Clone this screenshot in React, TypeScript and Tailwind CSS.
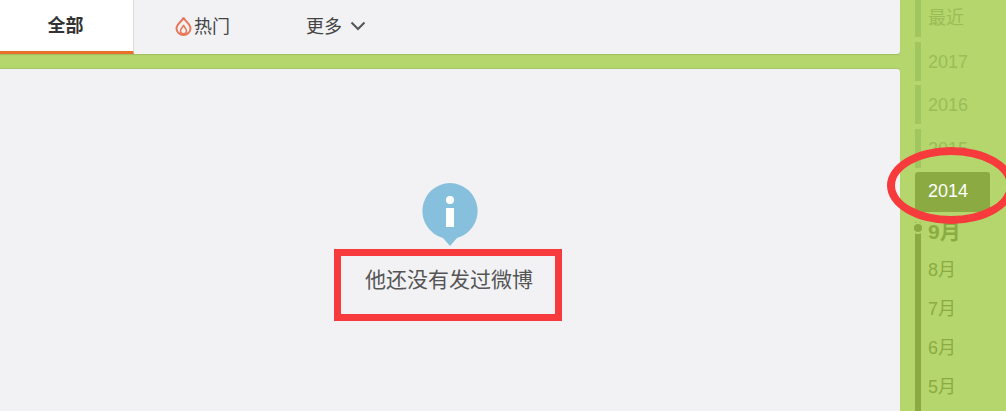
const font = { fontFamily: '"Microsoft YaHei", "Liberation Sans", "Noto Sans CJK SC", sans-serif' };

function YearRow({ label }: { label: string }) {
  return (
    <div className="flex h-[43.5px] shrink-0">
      <div className="w-[6px] h-[39px] bg-[#a1c660] shrink-0" />
      <div className="ml-[7px] mt-[8px] text-[18px] leading-[24px] text-[#9abd58]">{label}</div>
    </div>
  );
}

function MonthRow({ label }: { label: string }) {
  return (
    <div className="flex h-[39px] shrink-0">
      <div className="w-[6px] h-full bg-[#8bab42] shrink-0" />
      <div className="ml-[7px] mt-[6px] text-[18px] leading-[24px] text-[#8bab42]">{label}</div>
    </div>
  );
}

export default function App() {
  return (
    <div style={font} className="relative w-[1006px] h-[411px] overflow-hidden bg-[#b5d66d] flex">
      <div className="w-[900px] shrink-0 flex flex-col">
        <div className="h-[54px] bg-[#f2f2f5] rounded-br-[3px] flex text-[18px] text-[#444] shadow-[0_1px_1px_rgba(0,0,0,0.12)]">
          <div className="w-[134px] h-full bg-white border-b-[3px] border-[#e96f2b] border-r border-r-[#dcdcdc] flex items-center justify-center font-bold text-[#333] pr-[2px] pt-[1px]">
            全部
          </div>
          <div className="ml-[41px] h-full flex items-center">
            <svg width="17" height="20" viewBox="0 0 17 20" fill="none" stroke="#e8775a" strokeWidth="2" className="mr-[2px] mb-[2px]">
              <path d="M8.5 1.5C8 5 1.500 7.500 1.500 12.500a7 6.500 0 0 0 14 0C15.500 7.500 9.500 5 8.500 1.500Z" />
              <path d="M8.500 9c-.5 2-3 3.500-3 5.800a3 3 0 0 0 6 0C11.500 12.500 9 11 8.500 9Z" strokeWidth="1.500" />
            </svg>
            <span>热门</span>
          </div>
          <div className="ml-[76px] h-full flex items-center">
            <span>更多</span>
            <svg width="16" height="10" viewBox="0 0 16 10" fill="none" stroke="#555" strokeWidth="2" className="ml-[8px] mb-[3px]">
              <path d="M1.500 1.500 8 8l6.500-6.500" />
            </svg>
          </div>
        </div>
        <div className="mt-[15px] flex-1 bg-[#f2f2f5] rounded-tr-[3px] flex flex-col items-center pt-[113px] shadow-[0_-1px_1px_rgba(0,0,0,0.08)]">
          <svg width="58" height="66" viewBox="0 0 58 66">
            <path d="M29 1a28 28 0 0 1 7 55L29 64l-7-8A28 28 0 0 1 29 1Z" fill="#86c0dd" />
            <circle cx="29" cy="18" r="4" fill="#fff" />
            <rect x="25" y="26" width="8" height="19" fill="#fff" />
          </svg>
          <div className="mt-[18px] mr-[2px] text-[21px] leading-[28px] text-[#555]">他还没有发过微博</div>
        </div>
      </div>
      <div className="ml-[15px] flex-1 flex flex-col -mt-[2px]">
        <YearRow label="最近" />
        <YearRow label="2017" />
        <YearRow label="2016" />
        <YearRow label="2015" />
        <div className="w-[75px] h-[40px] shrink-0 bg-[#8bab42] rounded-[3px] text-white text-[18px] leading-[39px] pl-[13px]">2014</div>
        <div className="flex h-[40px] shrink-0 relative">
          <div className="w-[6px] h-[40px] bg-[#8bab42] mt-[10px] shrink-0" />
          <span className="absolute left-[-1px] top-[12px] w-[8px] h-[8px] rounded-full bg-[#8bab42] ring-2 ring-[#b5d66d]" />
          <div className="ml-[7px] mt-[6px] text-[21px] leading-[28px] font-bold text-[#8bab42]">9月</div>
        </div>
        <MonthRow label="8月" />
        <MonthRow label="7月" />
        <MonthRow label="6月" />
        <MonthRow label="5月" />
        <MonthRow label="" />
      </div>
      <div className="absolute left-[334px] top-[249px] w-[228px] h-[72px] border-[7px] border-[#f73a3c]" />
      <div className="absolute left-[887px] top-[147px] w-[128px] h-[77px] rounded-[50%] border-[8px] border-[#f73a3c]" />
    </div>
  );
}
